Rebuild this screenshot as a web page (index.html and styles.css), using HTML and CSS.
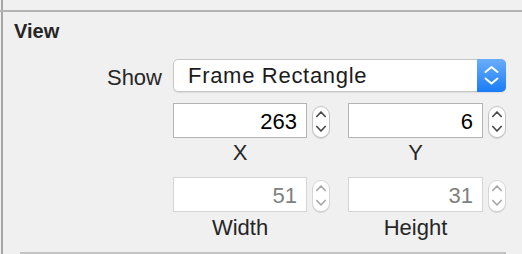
FILE: index.html
```html
<!DOCTYPE html>
<html>
<head>
<meta charset="utf-8">
<link rel="stylesheet" href="styles.css">
</head>
<body>
<div class="inspector">
  <div class="top-gap"></div>
  <div class="rule"></div>
  <section class="panel">
    <h2 class="title">View</h2>
    <div class="show-row">
      <div class="row-label">Show</div>
      <div class="popup">
        <span class="popup-text">Frame Rectangle</span>
        <span class="popup-arrows">
          <svg width="29" height="33" viewBox="0 0 29 33"><path d="M8.5 13 L14.5 8 L20.5 13" fill="none" stroke="#fff" stroke-width="2" stroke-linecap="round" stroke-linejoin="round"/><path d="M8.5 19.5 L14.5 24.5 L20.5 19.5" fill="none" stroke="#fff" stroke-width="2" stroke-linecap="round" stroke-linejoin="round"/></svg>
        </span>
      </div>
    </div>

    <div class="field-row first">
      <div class="group">
        <div class="control">
          <div class="field w134">263</div>
          <svg class="stepper" width="18" height="32" viewBox="0 0 18 32"><rect x="0.5" y="0.5" width="17" height="31" rx="8.5" fill="#fff" stroke="#c2c2c2"/><path d="M4.8 10.5 L9 6 L13.2 10.5" fill="none" stroke="#4a4a4a" stroke-width="1.7" stroke-linecap="round" stroke-linejoin="round"/><path d="M4.8 20.5 L9 25 L13.2 20.5" fill="none" stroke="#4a4a4a" stroke-width="1.7" stroke-linecap="round" stroke-linejoin="round"/></svg>
        </div>
        <div class="caption w134">X</div>
      </div>
      <div class="group">
        <div class="control">
          <div class="field w135">6</div>
          <svg class="stepper" width="18" height="32" viewBox="0 0 18 32"><rect x="0.5" y="0.5" width="17" height="31" rx="8.5" fill="#fff" stroke="#c2c2c2"/><path d="M4.8 10.5 L9 6 L13.2 10.5" fill="none" stroke="#4a4a4a" stroke-width="1.7" stroke-linecap="round" stroke-linejoin="round"/><path d="M4.8 20.5 L9 25 L13.2 20.5" fill="none" stroke="#4a4a4a" stroke-width="1.7" stroke-linecap="round" stroke-linejoin="round"/></svg>
        </div>
        <div class="caption w135">Y</div>
      </div>
    </div>

    <div class="field-row second">
      <div class="group">
        <div class="control">
          <div class="field disabled w134">51</div>
          <svg class="stepper" width="18" height="32" viewBox="0 0 18 32"><rect x="0.5" y="0.5" width="17" height="31" rx="8.5" fill="#fff" stroke="#d6d6d6"/><path d="M4.8 10.5 L9 6 L13.2 10.5" fill="none" stroke="#a8a8a8" stroke-width="1.7" stroke-linecap="round" stroke-linejoin="round"/><path d="M4.8 20.5 L9 25 L13.2 20.5" fill="none" stroke="#a8a8a8" stroke-width="1.7" stroke-linecap="round" stroke-linejoin="round"/></svg>
        </div>
        <div class="caption lower w134">Width</div>
      </div>
      <div class="group">
        <div class="control">
          <div class="field disabled w135">31</div>
          <svg class="stepper" width="18" height="32" viewBox="0 0 18 32"><rect x="0.5" y="0.5" width="17" height="31" rx="8.5" fill="#fff" stroke="#d6d6d6"/><path d="M4.8 10.5 L9 6 L13.2 10.5" fill="none" stroke="#a8a8a8" stroke-width="1.7" stroke-linecap="round" stroke-linejoin="round"/><path d="M4.8 20.5 L9 25 L13.2 20.5" fill="none" stroke="#a8a8a8" stroke-width="1.7" stroke-linecap="round" stroke-linejoin="round"/></svg>
        </div>
        <div class="caption lower w135">Height</div>
      </div>
    </div>

    <div class="bottom-rule"></div>
  </section>
</div>
</body>
</html>
```

FILE: styles.css
```css
html, body {
  margin: 0;
  padding: 0;
  background: #f0f0f0;
  overflow: hidden;
}

body {
  width: 522px;
  height: 254px;
  font-family: "Helvetica Neue", "Liberation Sans", Arial, sans-serif;
  color: #262626;
}

.inspector {
  margin-left: 1px;
  border-left: 2px solid #a6a6a6;
  height: 254px;
}

.top-gap {
  height: 10px;
}

.rule {
  height: 2px;
  margin-left: -3px;
  background: #b3b3b3;
}

.panel {
  display: flex;
  flex-direction: column;
}

.title {
  margin: 8px 0 0 11px;
  font-size: 20px;
  line-height: 23px;
  font-weight: bold;
  color: #262626;
}

.show-row {
  display: flex;
  align-items: flex-start;
  margin-top: 16px;
}

.row-label {
  width: 159px;
  margin-right: 11px;
  margin-top: 6px;
  text-align: right;
  font-size: 22px;
  line-height: 25px;
}

.popup {
  display: flex;
  width: 333px;
  height: 33px;
  box-sizing: border-box;
  border: 1px solid #c6c6c6;
  border-radius: 5px;
  background: #fff;
  box-shadow: 0 1px 1px rgba(0, 0, 0, 0.08);
}

.popup-text {
  flex: 1;
  padding-left: 14px;
  font-size: 22px;
  line-height: 31px;
  color: #1c1c1c;
  letter-spacing: 0.7px;
}

.popup-arrows {
  display: block;
  width: 29px;
  height: 33px;
  margin: -1px -1px -1px 0;
  border-radius: 0 5px 5px 0;
  background: linear-gradient(#6aaefc, #1a7bf7);
}

.popup-arrows svg {
  display: block;
}

.field-row {
  display: flex;
  margin-left: 170px;
  gap: 18px;
}

.field-row.first {
  margin-top: 11px;
}

.field-row.second {
  margin-top: 12px;
}

.group {
  display: flex;
  flex-direction: column;
}

.control {
  display: flex;
  align-items: flex-end;
  gap: 5px;
}

.field {
  height: 35px;
  box-sizing: border-box;
  border: 1px solid #b4b4b4;
  background: #fff;
  padding: 2px 9px 0 0;
  text-align: right;
  font-size: 22px;
  line-height: 31px;
  color: #000;
}

.field.disabled {
  border-color: #d4d4d4;
  color: #808080;
}

.w134 {
  width: 134px;
}

.w135 {
  width: 135px;
}

.stepper {
  display: block;
  filter: drop-shadow(0 1px 0.5px rgba(0, 0, 0, 0.12));
}

.caption {
  margin-top: 2px;
  text-align: center;
  font-size: 22px;
  line-height: 25px;
  color: #262626;
}

.caption.lower {
  margin-top: 3px;
}

.bottom-rule {
  margin: 12px 0 0 17px;
  width: 486px;
  height: 2px;
  background: #c3c3c3;
}
```
